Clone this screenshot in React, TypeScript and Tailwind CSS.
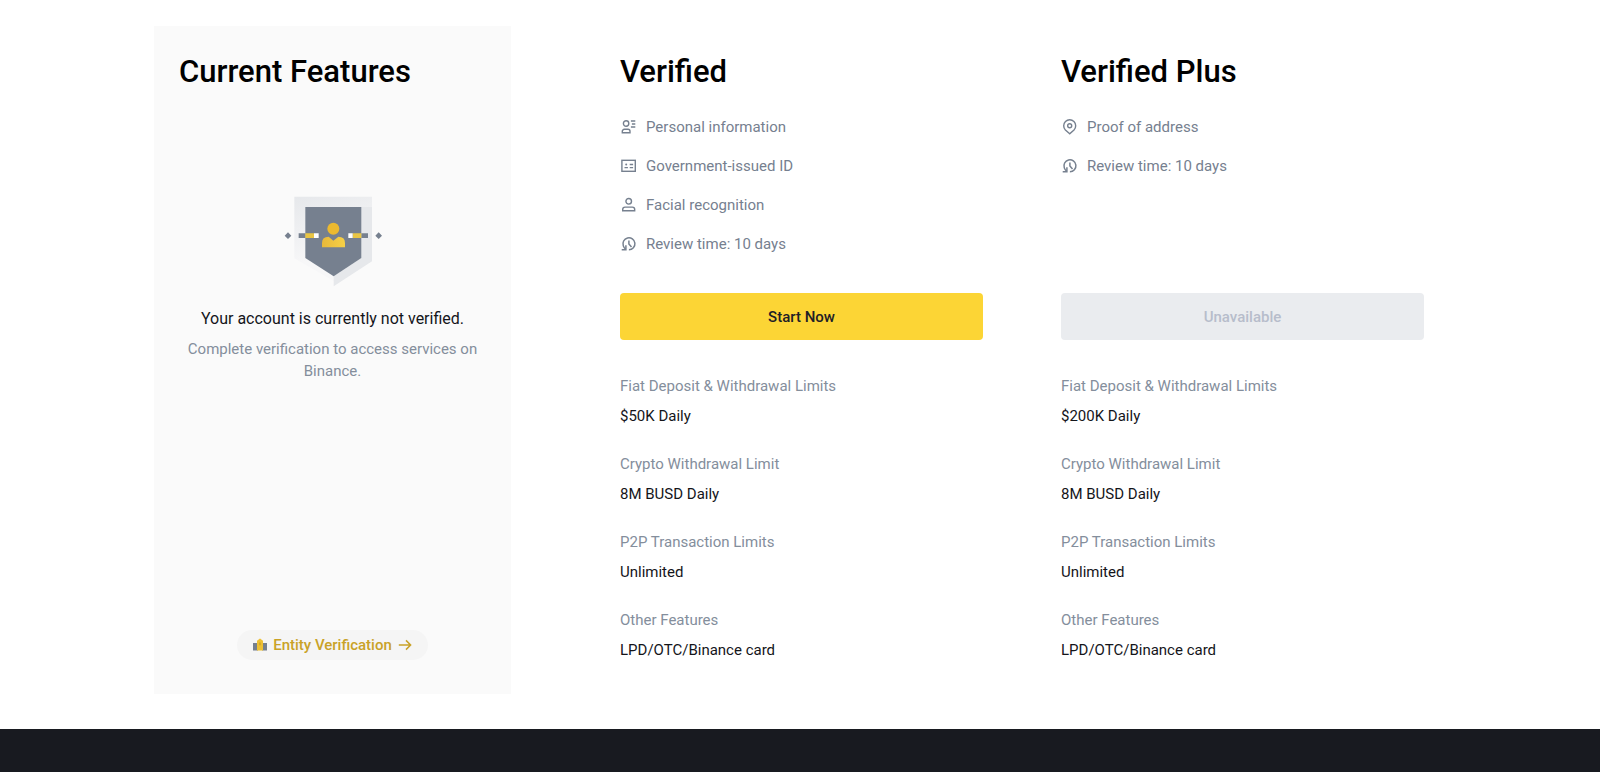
import type { ReactNode } from "react";

type Requirement = { icon: ReactNode; text: string };
type Limit = { label: string; value: string };

const iconClass = "h-4 w-4 shrink-0 overflow-visible";

function PersonalIcon() {
  return (
    <svg className={iconClass} viewBox="-0.7 0 16 16" fill="none" stroke="currentColor" strokeWidth="1.4" aria-hidden="true">
      <circle cx="5.4" cy="4.5" r="2.7" />
      <path d="M1.6 13.8v-1.5a2 2 0 0 1 2-2h3.7a2 2 0 0 1 2 2v1.5z" />
      <path d="M10.2 2h4.4M11.2 5h3.4M10.2 8h4.4" />
    </svg>
  );
}

function IdIcon() {
  return (
    <svg className={iconClass} viewBox="-0.7 0 16 16" fill="none" stroke="currentColor" strokeWidth="1.4" aria-hidden="true">
      <rect x="1.2" y="2.3" width="13.4" height="11" />
      <path d="M3.8 9.6h3.4M9 6.5h3.4M9 9.6h3.4" />
      <circle cx="5.5" cy="6.5" r="1" fill="currentColor" stroke="none" />
    </svg>
  );
}

function FaceIcon() {
  return (
    <svg className={iconClass} viewBox="-0.7 0 16 16" fill="none" stroke="currentColor" strokeWidth="1.4" aria-hidden="true">
      <circle cx="8" cy="4.3" r="2.8" />
      <path d="M2 13.8v-1.4a2.3 2.3 0 0 1 2.3-2.3h7.4a2.3 2.3 0 0 1 2.3 2.3v1.4z" />
    </svg>
  );
}

function TimeIcon() {
  return (
    <svg className={iconClass} viewBox="-0.7 0 16 16" fill="none" stroke="currentColor" strokeWidth="1.5" aria-hidden="true">
      <path d="M8.2 13.8a6 6 0 1 0-5.6-3.9q.5 1.7 2.2 3.2" />
      <path d="M1 13.7h4.2V9.2" />
      <path d="M8.2 4.4V8l2.6 3" />
    </svg>
  );
}

function PinIcon() {
  return (
    <svg className={iconClass} viewBox="-0.7 0 16 16" fill="none" stroke="currentColor" strokeWidth="1.4" aria-hidden="true">
      <path d="M8 14.7 3.7 10.9a6 6 0 1 1 8.6 0z" />
      <circle cx="8" cy="6.8" r="2" />
    </svg>
  );
}

function ShieldArt() {
  return (
    <svg className="h-[92px] w-[100px]" viewBox="38 42 300 276" aria-hidden="true">
      <defs>
        <linearGradient id="shade" x1="0" y1="0" x2="0.3" y2="1">
          <stop offset="0" stopColor="#e6e8eb" />
          <stop offset="0.75" stopColor="#f7f7f8" />
          <stop offset="1" stopColor="#f7f7f8" />
        </linearGradient>
        <linearGradient id="gold" x1="0" y1="0" x2="1" y2="0">
          <stop offset="0" stopColor="#e8b93a" />
          <stop offset="1" stopColor="#f6d046" />
        </linearGradient>
      </defs>
      <path d="M72 47H305V241L190 300L72 232z" fill="url(#shade)" />
      <path d="M273 78H305V241L190 316V286L273 231z" fill="#e6e8eb" />
      <path d="M105 78H273V231L190 286L105 231z" fill="#76808f" />
      <path d="M53 154 63 164 53 174 43 164zM325 154 335 164 325 174 315 164z" fill="#76808f" />
      <path d="M85 157H105V171H85zM273 157H293V171H273z" fill="#76808f" />
      <path d="M105 157H131V171H105zM247 157H273V171H247z" fill="#e9c544" />
      <path d="M131 157H145V171H131zM234 157H247V171H234z" fill="#fff" />
      <circle cx="189" cy="143" r="18" fill="#ecb92f" />
      <path d="M155 199V186Q155 167 175 167L189 179 204 167Q224 167 224 186V199z" fill="url(#gold)" />
    </svg>
  );
}

function BuildingIcon() {
  return (
    <svg className="h-3.5 w-3.5 shrink-0" viewBox="0 0 14 14" aria-hidden="true">
      <path d="M0 5h5v7.5H0zM9 5h5v7.5H9z" fill="#76808f" />
      <path d="M4 2.8 7 .6 10 2.8v9.7H4z" fill="#eec033" />
      <path d="M6.4 4.5h1.2v2.8H6.4z" fill="#c99a20" />
    </svg>
  );
}

function ArrowIcon() {
  return (
    <svg className="h-3.5 w-3.5 shrink-0" viewBox="0 0 14 14" fill="none" stroke="currentColor" strokeWidth="1.5" aria-hidden="true">
      <path d="M.8 7h11.6M8 2.4 12.6 7 8 11.6" />
    </svg>
  );
}

const limits = (fiat: string): Limit[] => [
  { label: "Fiat Deposit & Withdrawal Limits", value: fiat },
  { label: "Crypto Withdrawal Limit", value: "8M BUSD Daily" },
  { label: "P2P Transaction Limits", value: "Unlimited" },
  { label: "Other Features", value: "LPD/OTC/Binance card" },
];

function Plan({
  title,
  requirements,
  action,
  disabled = false,
  fiat,
}: {
  title: string;
  requirements: Requirement[];
  action: string;
  disabled?: boolean;
  fiat: string;
}) {
  return (
    <section className="pt-[26px] pb-8">
      <h2 className="text-[31px] leading-10 font-medium text-black">{title}</h2>
      <ul className="mt-[23px] flex min-h-[141px] flex-col gap-[15px] text-[#76808f]">
        {requirements.map((item) => (
          <li key={item.text} className="flex items-center gap-[10px] leading-6">
            {item.icon}
            {item.text}
          </li>
        ))}
      </ul>
      <button
        type="button"
        disabled={disabled}
        className="mt-[37px] h-[47px] w-full rounded bg-[#fcd535] pt-[2px] font-medium text-[#1e2026] disabled:bg-[#eaecef] disabled:text-[#b7bdcb]"
      >
        {action}
      </button>
      <dl className="mt-[34px] flex flex-col gap-6 leading-6">
        {limits(fiat).map((item) => (
          <div key={item.label} className="flex flex-col gap-[6px]">
            <dt className="text-[#848e9c]">{item.label}</dt>
            <dd className="text-[#14151a]">{item.value}</dd>
          </div>
        ))}
      </dl>
    </section>
  );
}

export default function App() {
  return (
    <div className="flex min-h-screen flex-col bg-white font-[Roboto,'Liberation_Sans',sans-serif] text-[15px]">
      <main className="grid grid-cols-[388fr_363fr_363fr] gap-[78px] pt-[26px] pr-[176px] pb-[35px] pl-[154px]">
        <aside className="mr-[31px] flex flex-col items-center bg-[#fafafa] px-[25px] pt-[26px] pb-[34px] text-center">
          <h2 className="self-start text-[31px] leading-10 font-medium text-black">Current Features</h2>
          <div className="mt-[103px]">
            <ShieldArt />
          </div>
          <p className="mt-5 text-base leading-6 text-[#14151a]">Your account is currently not verified.</p>
          <p className="mt-[7px] leading-[22px] text-[#848e9c]">
            Complete verification to access services on Binance.
          </p>
          <a
            href="#entity"
            className="mt-auto flex h-[30px] items-center gap-[6px] rounded-full bg-[#f5f5f5] px-4 font-medium text-[#c9a227]"
          >
            <BuildingIcon />
            Entity Verification
            <ArrowIcon />
          </a>
        </aside>
        <Plan
          title="Verified"
          requirements={[
            { icon: <PersonalIcon />, text: "Personal information" },
            { icon: <IdIcon />, text: "Government-issued ID" },
            { icon: <FaceIcon />, text: "Facial recognition" },
            { icon: <TimeIcon />, text: "Review time: 10 days" },
          ]}
          action="Start Now"
          fiat="$50K Daily"
        />
        <Plan
          title="Verified Plus"
          requirements={[
            { icon: <PinIcon />, text: "Proof of address" },
            { icon: <TimeIcon />, text: "Review time: 10 days" },
          ]}
          action="Unavailable"
          disabled
          fiat="$200K Daily"
        />
      </main>
      <footer className="min-h-10 grow bg-[#181a20]" />
    </div>
  );
}
